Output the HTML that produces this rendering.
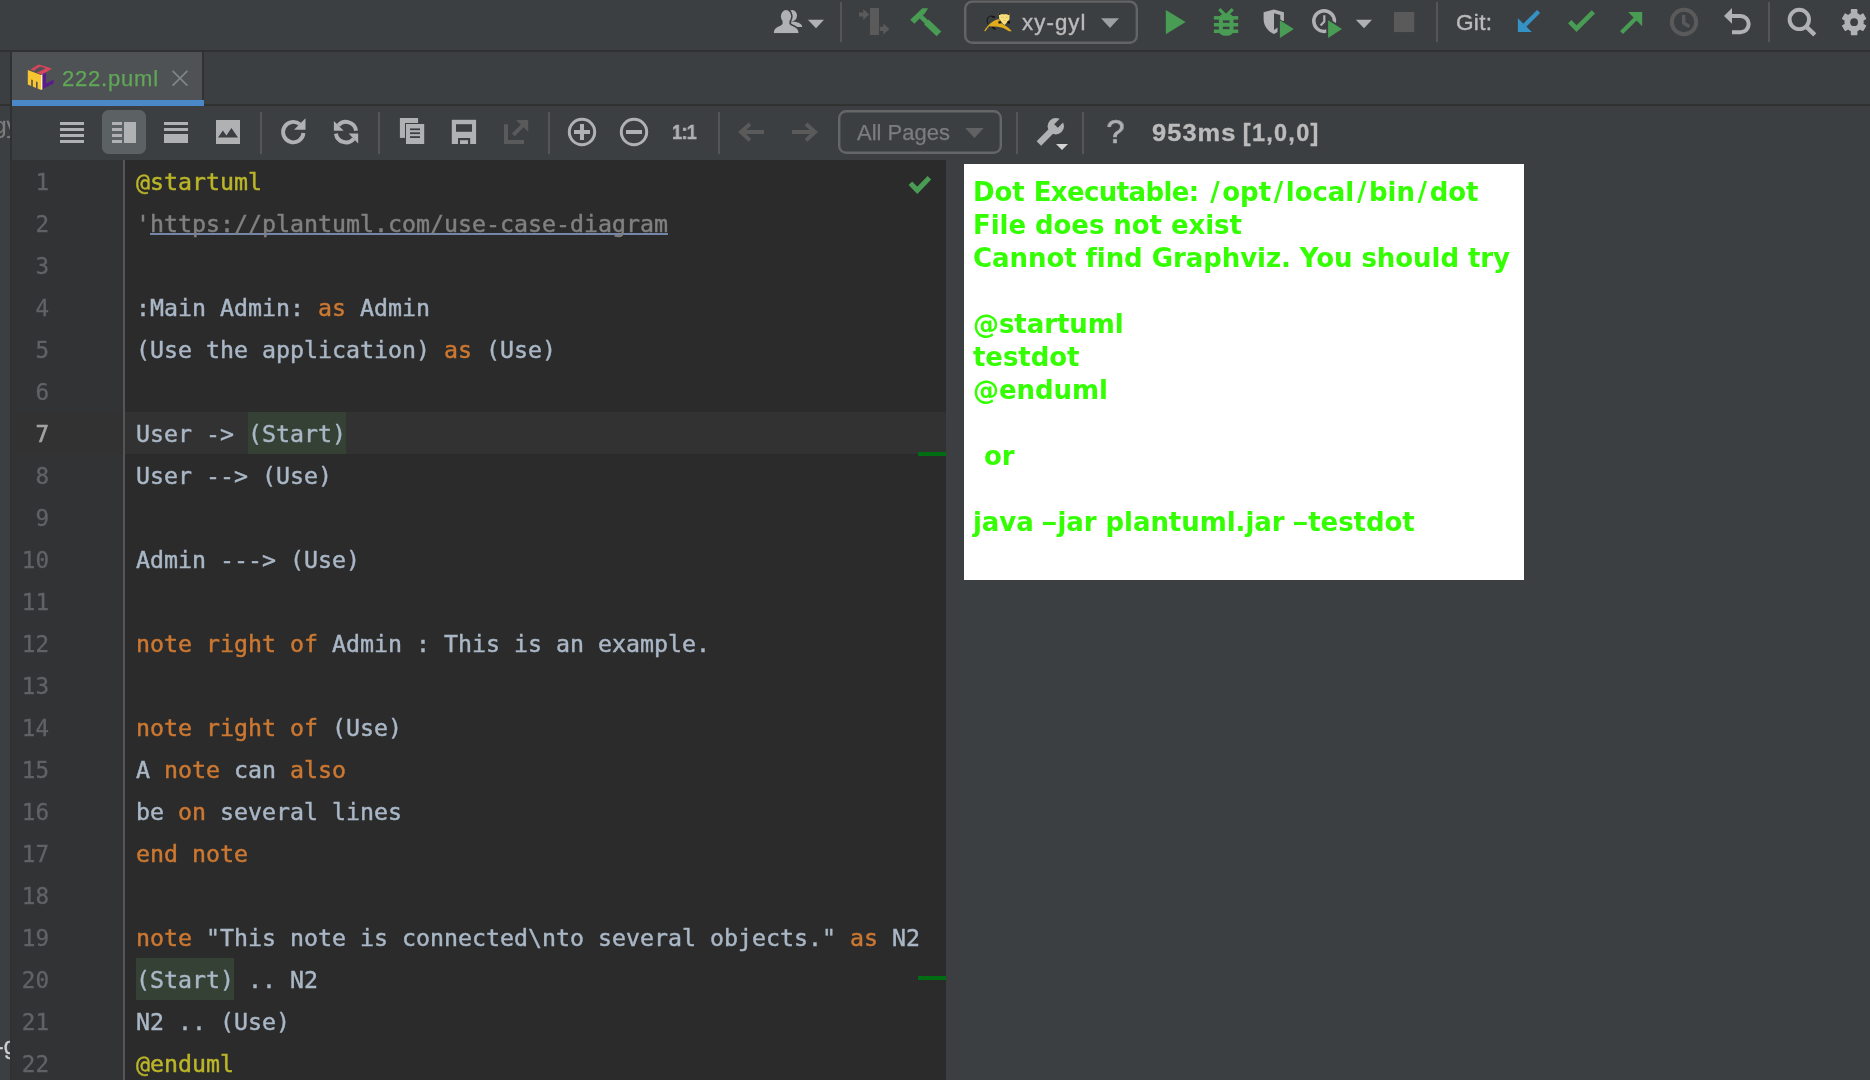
<!DOCTYPE html>
<html lang="en">
<head>
<meta charset="utf-8">
<title>222.puml</title>
<style>
*{box-sizing:border-box;margin:0;padding:0}
html,body{width:1870px;height:1080px;overflow:hidden;background:#3c3f41}
body{position:relative;font-family:"Liberation Sans",sans-serif;color:#bbbbbb}
.abs{position:absolute}
#topbar{left:0;top:0;width:1870px;height:50px;background:#3c3f41}
#topline{left:0;top:50px;width:1870px;height:2px;background:#303131}
#leftstrip{left:0;top:52px;width:10px;height:1028px;background:#3c3f41;overflow:hidden}
#leftline{left:10px;top:52px;width:2px;height:1028px;background:#2f3132}
#tabrow{left:12px;top:52px;width:1858px;height:52px;background:#3c3f41}
#tab{left:12px;top:52px;width:190px;height:48px;background:#4e5254}
#tabsep{left:202px;top:52px;width:2px;height:48px;background:#313131}
#tabline{left:0;top:104px;width:1870px;height:2px;background:#303131}
#tabul{left:12px;top:100px;width:192px;height:6px;background:#4a88c7}
#ptool{left:12px;top:106px;width:1858px;height:54px;background:#3c3f41}
#gutter{left:12px;top:160px;width:111px;height:920px;background:#313335}
#gutline{left:123px;top:160px;width:2px;height:920px;background:#555555}
#editor{left:125px;top:160px;width:821px;height:920px;background:#2b2b2b}
#right{left:946px;top:160px;width:924px;height:920px;background:#3c3f41}
.sep{position:absolute;width:2px;background:#555555}
svg{position:absolute;overflow:visible}
/* code */
.ln{position:absolute;left:11.4px;width:38px;text-align:right;height:42px;line-height:42px;font-family:"DejaVu Sans Mono","Liberation Mono",monospace;font-size:22.6px;color:#606366;white-space:pre;padding-top:0.6px;-webkit-text-stroke:0.3px currentColor;will-change:transform}
.cl{position:absolute;left:136px;height:42px;line-height:42px;font-family:"DejaVu Sans Mono","Liberation Mono",monospace;font-size:23.25px;color:#a9b7c6;white-space:pre;padding-top:0.6px;-webkit-text-stroke:0.45px currentColor;will-change:transform}
.k{color:#cc7832}.y{color:#bbb529}.c{color:#808080}.u{text-decoration:underline;text-decoration-thickness:2px;text-underline-offset:0.8px;text-decoration-color:#7486aa;text-decoration-skip-ink:none}
.hlb{width:98px;height:42px;background:#344134}
.sl{margin:0 2.7px}
.ex{letter-spacing:-0.62px}
.hy{display:inline-block;transform:scale(1.6,0.85);margin:0 2.5px 0 1.5px}
#caretrow{left:12px;top:412px;width:934px;height:42px;background:#323232}
#imgbox{left:964px;top:164px;width:560px;height:415.5px;background:#ffffff}
.it{position:absolute;left:973.4px;letter-spacing:-0.06px;font-family:"DejaVu Sans","Liberation Sans",sans-serif;font-weight:bold;font-size:26px;color:#33ff02;white-space:pre;line-height:33px;height:33px;will-change:transform}
.ui{position:absolute;white-space:pre;will-change:transform;font-family:"Liberation Sans",sans-serif}
</style>
</head>
<body>
<div id="topbar" class="abs"></div>
<div id="topline" class="abs"></div>
<div id="leftstrip" class="abs"></div>
<div id="leftline" class="abs"></div>
<div id="tabrow" class="abs"></div>
<div id="tab" class="abs"></div>
<div id="tabsep" class="abs"></div>
<div id="tabline" class="abs"></div>
<div id="tabul" class="abs"></div>
<div id="ptool" class="abs"></div>
<div id="gutter" class="abs"></div>
<div id="editor" class="abs"></div>
<div id="right" class="abs"></div>
<div id="caretrow" class="abs"></div>
<div id="gutline" class="abs"></div>
<!--CODE-->
<div class="abs hlb" style="left:248px;top:412px"></div><div class="abs hlb" style="left:136px;top:958px"></div>
<div class="ln" style="top:160px">1</div>
<div class="cl" style="top:160px"><span class="y">@startuml</span></div>
<div class="ln" style="top:202px">2</div>
<div class="cl" style="top:202px"><span class="c">'</span><span class="c u">https://plantuml.com/use-case-diagram</span></div>
<div class="ln" style="top:244px">3</div>
<div class="ln" style="top:286px">4</div>
<div class="cl" style="top:286px">:Main Admin: <span class="k">as</span> Admin</div>
<div class="ln" style="top:328px">5</div>
<div class="cl" style="top:328px">(Use the application) <span class="k">as</span> (Use)</div>
<div class="ln" style="top:370px">6</div>
<div class="ln" style="top:412px;color:#a4a3a3;-webkit-text-stroke:0.6px #a4a3a3">7</div>
<div class="cl" style="top:412px">User -&gt; (Start)</div>
<div class="ln" style="top:454px">8</div>
<div class="cl" style="top:454px">User --&gt; (Use)</div>
<div class="ln" style="top:496px">9</div>
<div class="ln" style="top:538px">10</div>
<div class="cl" style="top:538px">Admin ---&gt; (Use)</div>
<div class="ln" style="top:580px">11</div>
<div class="ln" style="top:622px">12</div>
<div class="cl" style="top:622px"><span class="k">note right of</span> Admin : This is an example.</div>
<div class="ln" style="top:664px">13</div>
<div class="ln" style="top:706px">14</div>
<div class="cl" style="top:706px"><span class="k">note right of</span> (Use)</div>
<div class="ln" style="top:748px">15</div>
<div class="cl" style="top:748px">A <span class="k">note</span> can <span class="k">also</span></div>
<div class="ln" style="top:790px">16</div>
<div class="cl" style="top:790px">be <span class="k">on</span> several lines</div>
<div class="ln" style="top:832px">17</div>
<div class="cl" style="top:832px"><span class="k">end note</span></div>
<div class="ln" style="top:874px">18</div>
<div class="ln" style="top:916px">19</div>
<div class="cl" style="top:916px"><span class="k">note</span> "This note is connected\nto several objects." <span class="k">as</span> N2</div>
<div class="ln" style="top:958px">20</div>
<div class="cl" style="top:958px">(Start) .. N2</div>
<div class="ln" style="top:1000px">21</div>
<div class="cl" style="top:1000px">N2 .. (Use)</div>
<div class="ln" style="top:1042px">22</div>
<div class="cl" style="top:1042px"><span class="y">@enduml</span></div>
<!--/CODE-->
<div id="imgbox" class="abs"></div>
<!--IMGTEXT-->
<div class="it" style="top:176px">Dot <span class="ex">Executable:</span> <span class="sl">/</span>opt<span class="sl">/</span>local<span class="sl">/</span>bin<span class="sl">/</span>dot</div>
<div class="it" style="top:209px">File does not exist</div>
<div class="it" style="top:242px">Cannot find Graphviz. You should try</div>
<div class="it" style="top:308px">@startuml</div>
<div class="it" style="top:341px">testdot</div>
<div class="it" style="top:374px">@enduml</div>
<div class="it" style="top:440px;margin-left:1.4px"> or</div>
<div class="it" style="top:506px">java <span class="hy">-</span>jar plantuml.jar <span class="hy">-</span>testdot</div>
<!--/IMGTEXT-->
<!--EXTRA-->
<div class="abs" style="left:918px;top:452px;width:28px;height:4px;background:#006d12"></div>
<div class="abs" style="left:918px;top:976px;width:28px;height:4px;background:#006d12"></div>
<svg class="abs" style="left:900px;top:170px" width="40" height="30" viewBox="900 170 40 30"><path d="M910.4 183.3 L917.3 190.3 L929.4 177.8" fill="none" stroke="#499c54" stroke-width="5.1"/></svg>
<div class="abs" style="left:0;top:106px;width:10px;height:54px;overflow:hidden"><div class="ui" style="left:-6.4px;top:6px;font-size:22.5px;line-height:28px;color:#7d7d7d;-webkit-text-stroke:0.3px #7d7d7d">gy-gyl</div></div>
<div class="abs" style="left:0;top:1025px;width:10px;height:50px;overflow:hidden"><div class="ui" style="left:-4.2px;top:6.6px;font-size:23px;line-height:28px;color:#cfcfcf;-webkit-text-stroke:0.3px #cfcfcf">-gyl</div></div>
<!--/EXTRA-->
<!--TOPICONS-->
<svg class="abs" style="left:0;top:0" width="1870" height="50" viewBox="0 0 1870 50">
<!-- users -->
<g fill="#afb1b3">
<ellipse cx="792.3" cy="15.6" rx="4.7" ry="5.6"/>
<path d="M790 21.2 C797 21.6 802.2 23.2 802.2 26.9 L790 26.9 Z"/>
<g stroke="#3c3f41" stroke-width="3.2" stroke-linejoin="round">
<ellipse cx="786" cy="16.3" rx="5.1" ry="6.2"/>
<path id="ub" d="M773.9 33.2 C773.9 28.8 776 27.4 780.8 25.4 C782.6 24.6 783 23.4 782.4 21 L789.6 21 C789 23.4 789.4 24.6 791.2 25.4 C796 27.4 798.5 28.8 798.5 33.2 Z"/>
</g>
<ellipse cx="786" cy="16.3" rx="5.1" ry="6.2"/>
<use href="#ub"/>
<rect x="772" y="33.2" width="28" height="3" fill="#3c3f41"/>
</g>
<path d="M807.9 19.8 L824 19.8 L816 28.3 Z" fill="#afb1b3"/>
<rect x="840" y="2" width="2" height="40" fill="#555555"/>
<!-- step -->
<g fill="#5a5a5a">
<rect x="870" y="8" width="9" height="27"/>
<path d="M859 12.4 L863.2 12.4 L863.2 9 L869.2 14.5 L863.2 20 L863.2 16.6 L859 16.6 Z"/>
<path d="M879.8 26.8 L883.3 26.8 L883.3 23.6 L889.4 29 L883.3 34.4 L883.3 31 L879.8 31 Z"/>
</g>
<!-- hammer -->
<g fill="#499c54" transform="translate(919.5 15.2) rotate(44)">
<path d="M-3.5 9.7 L2.2 9.7 L2.6 -5.5 L1.25 -11 L-2.8 -7 Z"/>
<rect x="2" y="-2.3" width="8" height="4.6"/>
<rect x="9.5" y="-3.3" width="17.5" height="6.6"/>
</g>
<!-- combo -->
<rect x="965.2" y="1.6" width="171.6" height="41.2" rx="7" fill="none" stroke="#626466" stroke-width="2.4"/>
<!-- tomcat -->
<g>
<path d="M988.2 24.3 C986.6 21.5 986.8 18.4 988.6 16.8 C990 15.6 992.5 16 995.2 17.2" fill="none" stroke="#111" stroke-width="0.9"/>
<path d="M991.6 15.9 L995.4 17.1 L994.2 17.9 L991.8 17.2 Z" fill="#111"/>
<path d="M990.6 26.2 L994 29.6 L996.3 29.5 L993.4 26.4 Z" fill="#111"/>
<path d="M984.2 31 C986 28 987.8 25.8 989.9 23.8 C992 21.8 994.5 20.3 997 19.5 L999.4 19.2 L1000 22.6 L1004.2 25 C1007 26.6 1009.8 28.8 1011.9 31.3 L1009 31.2 C1007 30 1005 28.8 1003.2 27.9 C1000.5 27 998 26.5 995.8 26.4 L990.7 26.4 L989.3 26.1 C988 27.6 986.6 29.4 985.4 31.3 Z" fill="#e0ac1c"/>
<path d="M998.7 12.4 L1000.6 14.2 L1007.5 14.2 L1009.4 12.4 L1009.5 19.2 L1004.7 25 L1002.9 23.8 L999.2 19 Z" fill="#fae07a"/>
<path d="M998.6 12.2 L1000.9 14.4 L999 14.9 Z M1009.5 12.2 L1007.2 14.4 L1009.2 14.9 Z" fill="#111"/>
<rect x="998.4" y="21.3" width="2.4" height="2.2" fill="#111"/>
<rect x="1007.4" y="21.1" width="2.6" height="2.4" fill="#111"/>
<path d="M1001.5 17 L1003.5 17.6 M1005.5 17.6 L1007.4 17 M1003.6 20.5 L1005.6 20.5" stroke="#c9b358" stroke-width="0.7" fill="none"/>
</g>
<path d="M1101 18.2 L1119 18.2 L1110 28 Z" fill="#9da0a2"/>
<!-- run -->
<path d="M1165.8 10 L1185.6 22.1 L1165.8 34.2 Z" fill="#499c54"/>
<!-- bug -->
<g fill="#499c54">
<path d="M1218.2 10.2 L1220.4 8 L1226 13.8 L1231.6 8 L1233.8 10.2 L1228.4 15.8 L1223.6 15.8 Z"/>
<rect x="1218.9" y="13.4" width="14.6" height="22.4" rx="6.4" ry="5.4"/>
<rect x="1213.9" y="16.1" width="24.3" height="3.5"/>
<rect x="1213.9" y="23" width="24.3" height="3.5"/>
<rect x="1213.9" y="29.5" width="24.3" height="3.5"/>
</g>
<rect x="1222.9" y="20.4" width="6.6" height="2.4" fill="#3c3f41"/>
<rect x="1222.9" y="26.7" width="6.6" height="2.4" fill="#3c3f41"/>
<!-- coverage shield -->
<path d="M1263.6 12.3 L1274 9.4 L1283.9 12.3 L1283.9 21 L1280.3 21 L1280.3 14.9 L1274 13.2 L1274 30 L1277.5 27.5 L1277.5 32 L1274 34 C1267 31 1263.6 25 1263.6 19 Z" fill="#afb1b3"/>
<path d="M1279.9 20.3 L1293.9 29.1 L1279.9 38 Z" fill="#499c54" stroke="#3c3f41" stroke-width="1.6" paint-order="stroke"/>
<!-- profile clock -->
<circle cx="1324.1" cy="21.1" r="10.3" fill="none" stroke="#afb1b3" stroke-width="3.5"/>
<path d="M1324.3 15.2 L1324.3 21.5 L1320.6 25.4" fill="none" stroke="#afb1b3" stroke-width="2.2"/>
<path d="M1328.1 20.3 L1342 29.1 L1328.1 38 Z" fill="#499c54" stroke="#3c3f41" stroke-width="3.6" paint-order="stroke"/>
<path d="M1355.9 19.8 L1372 19.8 L1364 28.3 Z" fill="#afb1b3"/>
<rect x="1393.9" y="12" width="20.3" height="20.1" fill="#5a5a5a"/>
<rect x="1436" y="2" width="2" height="40" fill="#555555"/>
<!-- git update -->
<g fill="#3592c4" stroke="none">
<path d="M1517.9 18.2 L1517.9 32.1 L1531.8 32.1 Z"/>
<path d="M1537.1 10 L1540.1 13 L1525.5 27.6 L1522.5 24.6 Z"/>
</g>
<!-- commit check -->
<path d="M1569.7 21.7 L1576.5 28.7 L1593.4 11.8" fill="none" stroke="#499c54" stroke-width="4.7"/>
<!-- push -->
<g fill="#499c54">
<path d="M1628.1 12 L1642.2 12 L1642.2 26.2 Z"/>
<path d="M1620.1 31.1 L1623 34 L1637.6 19.4 L1634.7 16.5 Z"/>
</g>
<!-- history -->
<circle cx="1684" cy="22" r="12.2" fill="none" stroke="#5a5a5a" stroke-width="4"/>
<path d="M1683.7 15 L1683.7 23 L1689.4 26.6" fill="none" stroke="#5a5a5a" stroke-width="3.4"/>
<!-- undo -->
<path d="M1724 16 L1732 8 L1732 23.8 Z" fill="#afb1b3"/>
<path d="M1731 16 L1740.6 16 A8.1 8.1 0 0 1 1740.6 32.2 L1732 32.2" fill="none" stroke="#afb1b3" stroke-width="4"/>
<rect x="1768" y="2" width="2" height="40" fill="#555555"/>
<!-- search -->
<circle cx="1799.3" cy="19.4" r="9.7" fill="none" stroke="#afb1b3" stroke-width="3.9"/>
<path d="M1806.2 26.6 L1814.8 34.9" stroke="#afb1b3" stroke-width="4.4"/>
<!-- gear -->
<g transform="translate(1854.1 22.2)" fill="#afb1b3">
<g id="gt"><rect x="-3.3" y="-13.1" width="6.6" height="26.2" rx="0.8"/></g>
<use href="#gt" transform="rotate(60) scale(1 0.95)"/><use href="#gt" transform="rotate(120) scale(1 0.95)"/>
<circle r="9.6"/>
<circle r="3.9" fill="#3c3f41"/>
</g>
</svg>
<div class="ui" id="t_cfg" style="left:1022px;top:9px;font-size:22.2px;letter-spacing:1.1px;line-height:28px;color:#bbbbbb;-webkit-text-stroke:0.4px #bbbbbb">xy-gyl</div>
<div class="ui" id="t_git" style="left:1456px;top:9px;font-size:22.6px;letter-spacing:0.3px;line-height:28px;color:#bbbbbb;-webkit-text-stroke:0.4px #bbbbbb">Git:</div>
<!--/TOPICONS-->
<!--PTOOLICONS-->
<svg class="abs" style="left:0;top:52px" width="1870" height="108" viewBox="0 52 1870 108">
<!-- tab icon: plantuml cube -->
<g>
<path d="M27.8 70 L41 75 L41 90 L37.6 88.6 L37.6 82 L36 81.4 L36 87.9 L32.8 86.6 L32.8 80 L31.2 79.4 L31.2 85.9 L27.8 84.5 Z" fill="#f8c431"/>
<path d="M41 75 L42.6 74.2 L42.6 89 L41 90 Z" fill="#fff3c4"/>
<path d="M42.6 74.2 L46 72.6 L46 83.4 L53.6 79.8 L53.6 83.6 L42.6 89 Z" fill="#5a1b8c"/>
<path d="M30.5 69.5 C33 67.6 35.5 66.4 38.9 64.4 L52 68.4 C49 70.6 46 72.4 41.4 74.4 L36.6 72.6 C40 71.2 43.4 69.8 45.6 68.2 L40.6 66.6 C39 67.6 37.4 68.2 35.6 69.2 L34.5 70.9 Z" fill="#d8455c"/>
</g>
<!-- tab close -->
<path d="M172.6 70.8 L187.4 85.6 M187.4 70.8 L172.6 85.6" stroke="#7e868b" stroke-width="1.7" fill="none"/>
<g fill="#afb1b3">
<!-- icon1 -->
<rect x="60" y="122" width="24" height="3"/><rect x="60" y="128" width="24" height="3"/><rect x="60" y="134" width="24" height="3"/><rect x="60" y="140" width="24" height="3"/>
</g>
<rect x="102" y="110" width="44" height="44" rx="6.5" fill="#5c6164"/>
<g fill="#afb1b3">
<rect x="112" y="122" width="10" height="3"/><rect x="112" y="128" width="10" height="3"/><rect x="112" y="134" width="10" height="3"/><rect x="112" y="140" width="10" height="3"/>
<rect x="124" y="122" width="12" height="21"/>
<!-- icon3 -->
<rect x="164" y="122" width="24" height="3"/><rect x="164" y="128" width="24" height="3"/><rect x="164" y="134" width="24" height="9"/>
<!-- image -->
<rect x="216" y="120" width="24" height="24"/>
</g>
<path d="M218 137.4 L222.9 130.4 L226.4 135.4 L231.4 127.9 L238 137.4 Z" fill="#3c3f41"/>
<rect x="260" y="112" width="2" height="42" fill="#555555"/>
<!-- refresh -->
<path d="M299.860 124.290 A10.2 10.2 0 1 0 303.460 132.990" fill="none" stroke="#afb1b3" stroke-width="3.9"/>
<path d="M305.5 118.3 L305.5 129.7 L294 129.7 Z" fill="#afb1b3"/>
<!-- sync -->
<g fill="none" stroke="#afb1b3" stroke-width="3.9">
<path d="M338.2 125.5 A10.2 10.2 0 0 1 356.1 130.8"/>
<path d="M353.8 138.7 A10.2 10.2 0 0 1 335.9 133.6"/>
</g>
<path d="M333.9 121 L333.9 130.8 L343.7 130.8 Z" fill="#afb1b3"/>
<path d="M358.2 133.6 L358.2 143.4 L348.6 133.6 Z" fill="#afb1b3"/>
<rect x="378" y="112" width="2" height="42" fill="#555555"/>
<!-- copy -->
<rect x="399.9" y="118" width="18.2" height="19.9" fill="#afb1b3"/>
<rect x="405" y="123" width="20" height="22" fill="#3c3f41"/>
<rect x="406" y="124" width="18.2" height="20" fill="#afb1b3"/>
<g fill="#3c3f41"><rect x="410" y="128.4" width="10" height="1.8"/><rect x="410" y="132.3" width="10" height="1.8"/><rect x="410" y="136.2" width="10" height="1.8"/></g>
<!-- save -->
<rect x="451.8" y="119.8" width="24.3" height="24.2" fill="#afb1b3"/>
<rect x="456" y="124.2" width="16" height="7.6" fill="#3c3f41"/>
<rect x="458" y="138" width="12.2" height="6.2" fill="#3c3f41"/>
<rect x="460" y="140.2" width="8" height="3.8" fill="#afb1b3"/>
<!-- export -->
<g fill="#5a5a5a">
<path d="M504 124.2 L508 124.2 L508 140 L524 140 L524 144 L504 144 Z"/>
<path d="M516.1 119.9 L528.2 119.9 L528.2 131.7 Z"/>
<path d="M511.9 133.5 L514.7 136.3 L525.4 125.6 L522.6 122.8 Z"/>
</g>
<rect x="548" y="112" width="2" height="42" fill="#555555"/>
<!-- zoom in/out -->
<circle cx="582" cy="132" r="12.7" fill="none" stroke="#afb1b3" stroke-width="3"/>
<rect x="574" y="130" width="16" height="4" fill="#afb1b3"/><rect x="580" y="124" width="4" height="16" fill="#afb1b3"/>
<circle cx="634" cy="132" r="12.7" fill="none" stroke="#afb1b3" stroke-width="3"/>
<rect x="626" y="130" width="16" height="4" fill="#afb1b3"/>
<rect x="718" y="112" width="2" height="42" fill="#555555"/>
<!-- arrows -->
<g fill="none" stroke="#5a5a5a" stroke-width="4">
<path d="M764 132 L741 132"/><path d="M750 124 L741 132 L750 140.400" stroke-linejoin="miter"/>
<path d="M792 132 L815 132"/><path d="M806 124 L815 132 L806 140.400"/>
</g>
<!-- pages combo -->
<rect x="839.2" y="111.2" width="161.6" height="41.6" rx="7" fill="none" stroke="#646667" stroke-width="2.4"/>
<path d="M965.3 128 L983.6 128 L974.5 138 Z" fill="#616263"/>
<rect x="1016" y="112" width="2" height="42" fill="#555555"/>
<!-- wrench -->
<g fill="#afb1b3">
<path d="M1036.650 141.150 L1041.150 145.650 L1054.500 132.300 L1050 127.800 Z"/>
<circle cx="1055.800" cy="126.200" r="8.200"/>
</g>
<path d="M1054.200 124.200 L1057.800 127.800 L1066 119.600 L1062.400 116 Z" fill="#3c3f41"/>
<path d="M1056 144 L1068 144 L1062 150 Z" fill="#d4d4d4"/>
<rect x="1082" y="112" width="2" height="42" fill="#555555"/>
</svg>
<div class="ui" id="t_tab" style="left:61.8px;top:64.8px;font-size:22px;letter-spacing:0.8px;line-height:28px;color:#60a857;-webkit-text-stroke:0.25px #60a857">222.puml</div>
<div class="ui" id="t_11" style="left:672.4px;top:118px;font-size:20px;font-weight:bold;line-height:28px;color:#afb1b3;letter-spacing:-0.6px;transform:scaleX(0.9);transform-origin:0 50%;-webkit-text-stroke:0.5px #afb1b3">1:1</div>
<div class="ui" id="t_pages" style="left:856.5px;top:118.5px;font-size:22px;letter-spacing:0px;-webkit-text-stroke:0.25px #7b7c7d;line-height:28px;color:#7b7c7d">All Pages</div>
<div class="ui" id="t_q" style="left:1106px;top:111.2px;font-size:34px;line-height:40px;color:#afb1b3;-webkit-text-stroke:0.7px #afb1b3;transform:scale(0.96,0.99)">?</div>
<div class="ui" id="t_ms" style="left:1151.8px;top:118.5px;font-size:23.5px;font-weight:bold;letter-spacing:1.25px;word-spacing:-3.6px;line-height:28px;color:#bbbbbb;-webkit-text-stroke:0.35px #bbbbbb"><span style="display:inline-block;letter-spacing:1px;transform:scaleX(1.08);transform-origin:0 50%;margin-right:8.5px">953ms</span> [1,0,0]</div>
<!--/PTOOLICONS-->
</body>
</html>
